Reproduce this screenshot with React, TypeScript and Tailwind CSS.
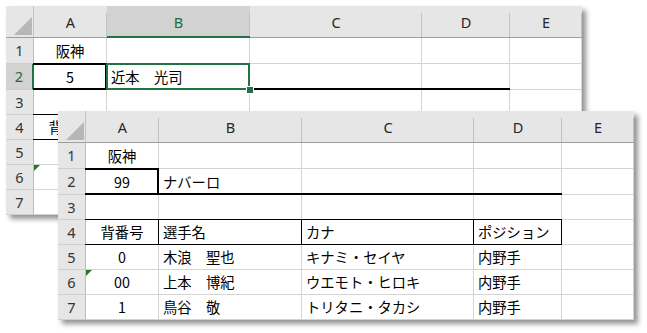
import React from "react";

type W = 0 | 1 | 2;
type Cell = { v?: string; c?: boolean; t?: W; b?: W; l?: W; r?: W; tri?: boolean; sel?: boolean };

const COLS = ["A", "B", "C", "D", "E"];

const TOP: Record<number, string> = { 1: "top-[-1px] h-px", 2: "top-[-1px] h-[2px]" };
const BOT: Record<number, string> = { 1: "bottom-[-1px] h-px", 2: "bottom-[-1px] h-[2px]" };
const LEFT: Record<number, string> = { 1: "left-[-1px] w-px", 2: "left-[-2px] w-[2px]" };
const RIGHT: Record<number, string> = { 1: "right-[-1px] w-px", 2: "right-[-1px] w-[2px]" };

function Corner() {
  return (
    <div className="relative bg-[#e6e6e6] border-r border-b border-r-[#c4c4c4] border-b-[#9e9e9e]">
      <svg className="absolute left-0 top-0" width="28" height="32" viewBox="0 0 28 32">
        <polygon points="26,11 26,29 8,29" fill="#b7b7b7" />
      </svg>
    </div>
  );
}

function ColHeader({ label, sel }: { label: string; sel?: boolean }) {
  return (
    <div
      className={
        "relative flex items-center justify-center text-[14.5px] leading-none font-['Noto_Sans',sans-serif] " +
        (sel
          ? "bg-[#d2d2d2] text-[#1d6b3f] border-b-2 border-b-[#217346]"
          : "bg-[#e6e6e6] text-[#262626] border-b border-b-[#9e9e9e]")
      }
    >
      <span className={sel ? "pt-[2px]" : "pt-[1px]"}>{label}</span>
      <span className="absolute right-0 top-[7px] bottom-0 w-px bg-[#c2c2c2]" />
    </div>
  );
}

function RowHeader({ n, sel }: { n: number; sel?: boolean }) {
  return (
    <div
      className={
        "flex items-center justify-center text-[14.5px] leading-none font-['Noto_Sans',sans-serif] border-b border-b-[#cfcfcf] " +
        (sel
          ? "bg-[#d2d2d2] text-[#1d6b3f] border-r-2 border-r-[#217346]"
          : "bg-[#e6e6e6] text-[#333333] border-r border-r-[#bdbdbd]")
      }
    >
      {n}
    </div>
  );
}

function DataCell({ cell }: { cell: Cell }) {
  return (
    <div
      className={
        "relative flex items-center border-r border-b border-[#d4d4d4] text-[14.3px] leading-none text-black font-['Noto_Sans_CJK_JP',sans-serif] " +
        (cell.c ? "justify-center" : "justify-start pl-[4px]")
      }
    >
      {cell.v ? <span className="whitespace-pre pt-[1px]">{cell.v}</span> : null}
      {cell.t ? <span className={"absolute left-[-1px] right-[-1px] bg-black z-10 " + TOP[cell.t]} /> : null}
      {cell.b ? <span className={"absolute left-[-1px] right-[-1px] bg-black z-10 " + BOT[cell.b]} /> : null}
      {cell.l ? <span className={"absolute top-[-1px] bottom-[-1px] bg-black z-10 " + LEFT[cell.l]} /> : null}
      {cell.r ? <span className={"absolute top-[-1px] bottom-[-1px] bg-black z-10 " + RIGHT[cell.r]} /> : null}
      {cell.tri ? (
        <svg className="absolute left-0 top-0 z-10" width="7" height="7" viewBox="0 0 7 7">
          <polygon points="0,0 6,0 0,6" fill="#1f7a2f" />
        </svg>
      ) : null}
      {cell.sel ? (
        <>
          <span className="absolute -inset-px border-2 border-[#217346] z-20" />
          <span className="absolute right-[-5px] bottom-[-5px] w-[8px] h-[8px] bg-[#217346] border border-white z-30" />
        </>
      ) : null}
    </div>
  );
}

function Sheet({ rows, selCol, selRow }: { rows: Cell[][]; selCol?: number; selRow?: number }) {
  return (
    <div className="grid grid-cols-[28px_73px_143px_172px_88px_72px] grid-rows-[32px_26px_26px_25px_25px_25px_25px_25px] bg-white">
      <Corner />
      {COLS.map((c, i) => (
        <ColHeader key={c} label={c} sel={selCol === i} />
      ))}
      {rows.map((row, ri) => (
        <React.Fragment key={ri}>
          <RowHeader n={ri + 1} sel={selRow === ri} />
          {row.map((cell, ci) => (
            <DataCell key={ci} cell={cell} />
          ))}
        </React.Fragment>
      ))}
    </div>
  );
}

const E: Cell = {};

const frontTable: Cell[][] = [
  [
    { v: "背番号", c: true, t: 1, b: 1, r: 1 },
    { v: "選手名", t: 1, b: 1, r: 1 },
    { v: "カナ", t: 1, b: 1, r: 1 },
    { v: "ポジション", t: 1, b: 1, r: 1 },
    E,
  ],
  [{ v: "0", c: true }, { v: "木浪　聖也" }, { v: "キナミ・セイヤ" }, { v: "内野手" }, E],
  [{ v: "00", c: true, tri: true }, { v: "上本　博紀" }, { v: "ウエモト・ヒロキ" }, { v: "内野手" }, E],
  [{ v: "1", c: true }, { v: "鳥谷　敬" }, { v: "トリタニ・タカシ" }, { v: "内野手" }, E],
];

// Back sheet: rows 4-7 are mostly covered by the front window, only column A's left edge shows.
const backTable: Cell[][] = [
  [{ v: "背番号", c: true, t: 1, b: 1, r: 1 }, { t: 1, b: 1, r: 1 }, { t: 1, b: 1, r: 1 }, { t: 1, b: 1, r: 1 }, E],
  [E, E, E, E, E],
  [{ tri: true }, E, E, E, E],
  [E, E, E, E, E],
];

const backRows: Cell[][] = [
  [{ v: "阪神", c: true }, E, E, E, E],
  [{ v: "5", c: true, t: 2, b: 2, r: 2 }, { v: "近本　光司", b: 2, sel: true }, { b: 2 }, { b: 2 }, E],
  [E, E, E, E, E],
  ...backTable,
];

const frontRows: Cell[][] = [
  [{ v: "阪神", c: true }, E, E, E, E],
  [{ v: "99", c: true, t: 2, b: 2, r: 2 }, { v: "ナバーロ", b: 2 }, { b: 2 }, { b: 2 }, E],
  [E, E, E, E, E],
  ...frontTable,
];

export default function App() {
  return (
    <div className="relative w-[647px] h-[333px] bg-white overflow-hidden isolate">
      <div className="absolute z-0 isolate left-[6px] top-[6px] shadow-[4px_4px_5px_rgba(0,0,0,0.42)]">
        <Sheet rows={backRows} selCol={1} selRow={1} />
      </div>
      <div className="absolute z-10 isolate left-[58px] top-[111px] shadow-[4px_4px_5px_rgba(0,0,0,0.42)]">
        <Sheet rows={frontRows} />
      </div>
    </div>
  );
}
